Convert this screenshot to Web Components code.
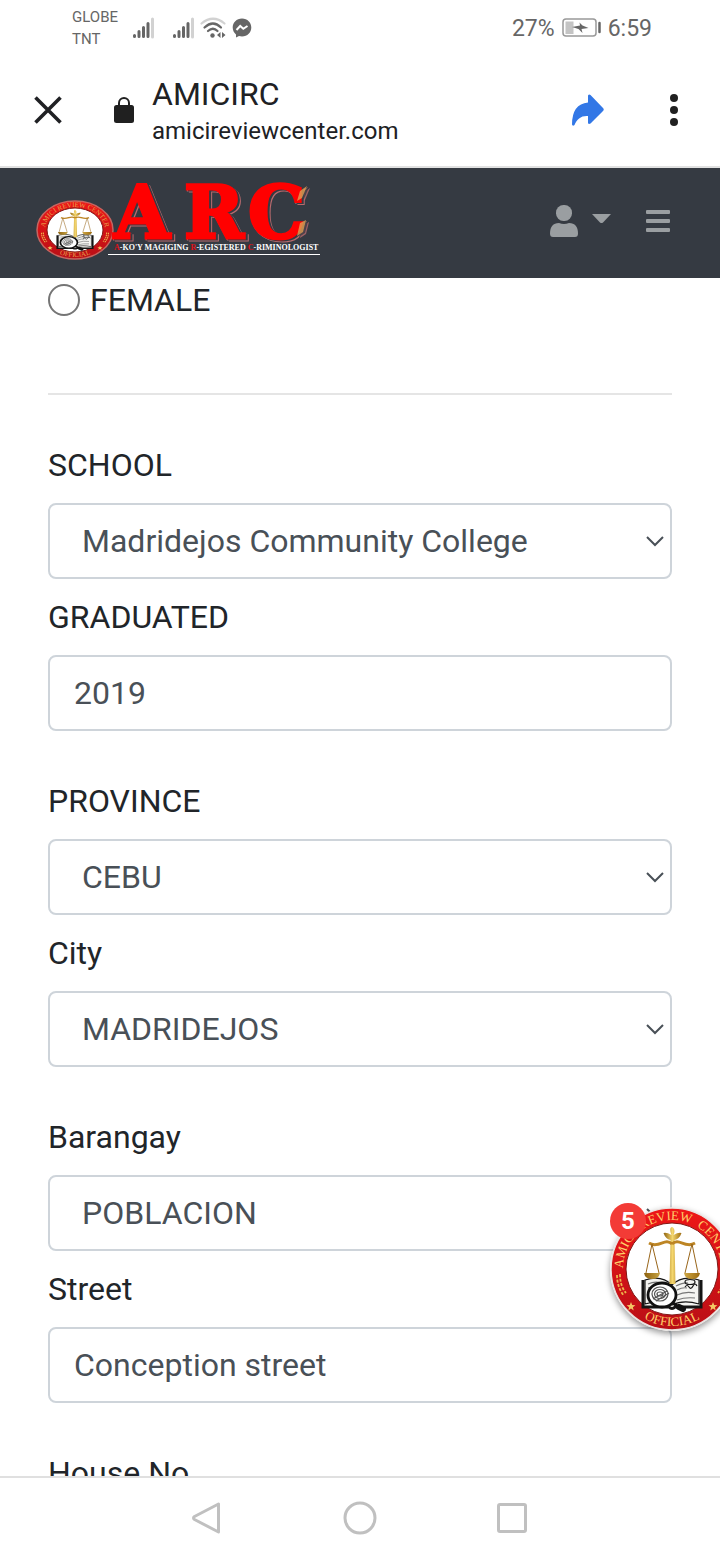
<!DOCTYPE html>
<html lang="en">
<head>
<meta charset="utf-8">
<meta name="viewport" content="width=device-width, initial-scale=1">
<title>AMICIRC</title>
<style>
html, body { margin: 0; height: 100%; }
body { font-family: Roboto, "Liberation Sans", sans-serif; color: #212529; background: #fff; }
</style>
</head>
<body>
<app-screen>
  <status-bar slot="top"></status-bar>
  <browser-bar slot="top" heading="AMICIRC" host-name="amicireviewcenter.com"></browser-bar>
  <site-header slot="top"></site-header>
  <radio-choice name="gender" label="FEMALE"></radio-choice>
  <section-rule></section-rule>
  <field-group>
    <form-field kind="select" name="school" label="SCHOOL" value="Madridejos Community College"></form-field>
    <form-field kind="text" name="graduated" label="GRADUATED" value="2019"></form-field>
  </field-group>
  <field-group>
    <form-field kind="select" name="province" label="PROVINCE" value="CEBU"></form-field>
    <form-field kind="select" name="city" label="City" value="MADRIDEJOS"></form-field>
  </field-group>
  <field-group>
    <form-field kind="select" name="barangay" label="Barangay" value="POBLACION"></form-field>
    <form-field kind="text" name="street" label="Street" value="Conception street"></form-field>
  </field-group>
  <field-group>
    <form-field kind="text" name="house" label="House No." value=""></form-field>
  </field-group>
  <chat-head slot="overlay" count="5"></chat-head>
  <system-nav slot="bottom"></system-nav>
</app-screen>
<script>
const define = (name, render) => customElements.define(name, class extends HTMLElement {
  connectedCallback() {
    if (this.shadowRoot) return;
    this.attachShadow({ mode: "open" }).innerHTML = render(this);
  }
});

const buttonReset = `button { appearance: none; border: 0; padding: 0; margin: 0; background: none; color: inherit; font: inherit; display: grid; place-items: center; cursor: pointer; } svg { display: block; }`;

define("app-screen", () => `
<style>
  :host { display: flex; flex-direction: column; height: 100vh; position: relative; overflow: hidden; }
  main { flex: 1; min-height: 0; overflow: hidden; padding: 0 48px; }
</style>
<slot name="top"></slot>
<main><slot></slot></main>
<slot name="bottom"></slot>
<slot name="overlay"></slot>`);

define("status-bar", () => `
<style>
  :host { display: flex; align-items: center; justify-content: space-between; height: 56px; flex: none; padding: 0 68px 0 72px; color: #666; }
  div { display: flex; align-items: center; }
  .carrier { font-size: 15px; line-height: 22px; width: 60px; }
  .right { font-size: 23px; gap: 7px; }
  svg { display: block; }
  .sig { margin-right: 18px; }
  .wifi { margin: 0 6px 0 -12px; }
</style>
<div>
  <div class="carrier"><span>GLOBE<br>TNT</span></div>
  <svg class="sig" width="22" height="22" viewBox="0 0 22 22" stroke-width="3" stroke-linecap="round" stroke="#666"><path d="M2.5 19.5v-1M7 19.5v-5M11.500 19.500v-9M16 19.500v-13"/><path d="M20.500 20V2" stroke="#d2d2d2"/></svg>
  <svg class="sig" width="22" height="22" viewBox="0 0 22 22" stroke-width="3" stroke-linecap="round" stroke="#666"><path d="M2.500 19.500v-1M7 19.500v-5M11.500 19.500v-9M16 19.500v-13"/><path d="M20.500 20V2" stroke="#d2d2d2"/></svg>
  <svg class="wifi" width="26" height="22" viewBox="0 0 26 22" fill="none" stroke="#666" stroke-width="2.200" stroke-linecap="round"><path d="M1.500 6.500Q13-3 24.500 6.500" stroke="#d2d2d2"/><path d="M4.500 10.500Q13 2.500 21 10.500M8 14Q13 9.500 17.500 14"/><circle cx="12.500" cy="18.500" r="2.200" fill="#666" stroke="none"/><path d="M20.500 15v6l-3.500-3zM22 15v6l3.500-3z" fill="#666" stroke="none"/></svg>
  <svg width="20" height="20" viewBox="0 0 20 20"><path d="M10 .5C4.500.5.7 4.500.7 9.500c0 3 1.300 5.300 3.300 7V19.500l3-1.500c1 .3 2 .4 3 .4 5.500 0 9.300-3.900 9.300-8.900S15.500.5 10 .5z" fill="#666"/><path d="M4.500 12l3.700-4 3.100 2.800L15.500 8" fill="none" stroke="#fff" stroke-width="2"/></svg>
</div>
<div class="right">
  <span>27%</span>
  <svg width="39" height="20" viewBox="0 0 39 20"><rect x="1" y="1" width="33" height="17" rx="3" fill="#fff" stroke="#999" stroke-width="1.500"/><rect x="3.500" y="3.500" width="8" height="12.500" fill="#c4c4c4"/><path d="M10 9l8-1.500-.5-3 3 3 6 2.500-7 1 1 4-4-4z" fill="#666"/><path d="M37.500 5v9" stroke="#666" stroke-width="2.500" stroke-linecap="round"/></svg>
  <span>6:59</span>
</div>`);

define("browser-bar", el => `
<style>
  :host { display: flex; align-items: center; box-sizing: border-box; height: 112px; flex: none; border-bottom: 2px solid #e1e1e1; padding: 0 22px 2px 24px; color: #202124; }
  ${buttonReset}
  button { width: 48px; height: 48px; }
  .lock { margin: 0 18px 0 42px; }
  .page { flex: 1; min-width: 0; padding-top: 4px; }
  .heading { font-size: 32px; line-height: 38px; }
  .host { font-size: 24px; line-height: 36px; }
  .more { margin-left: 38px; }
</style>
<button aria-label="Close"><svg width="28" height="28" viewBox="0 0 28 28"><path d="M1.500 1.500l25 25M26.500 1.500l-25 25" stroke="#202124" stroke-width="3.600"/></svg></button>
<svg class="lock" width="20" height="26" viewBox="0 0 20 26"><rect y="8" width="20" height="18" rx="2.500" fill="#202020"/><path d="M5 9V6a5 5 0 0 1 10 0v3" fill="none" stroke="#202020" stroke-width="2"/></svg>
<div class="page"><div class="heading">${el.getAttribute("heading")}</div><div class="host">${el.getAttribute("host-name")}</div></div>
<button aria-label="Share"><svg width="32" height="32" viewBox="0 0 32 32"><path d="M16 1.500q1-1.800 2.500-.5L31 14q1.500 1.500 0 3L18.500 29.500q-2 1-2.500-.5V22C9 21.500 5 25 2.500 31Q.500 32.500 0 30.500 0 10 16 8.500z" fill="#3277e6"/></svg></button>
<button class="more" aria-label="More options"><svg width="8" height="32" viewBox="0 0 8 32" fill="#202020"><circle cx="4" cy="4" r="4"/><circle cx="4" cy="16" r="4"/><circle cx="4" cy="28" r="4"/></svg></button>`);

/* Review centre seal; the ring and its lettering follow an ellipse of the given radii. */
define("center-seal", el => {
  const big = el.getAttribute("size") !== "small";
  const w = big ? 124 : 78, h = big ? 124 : 60, cx = w / 2, cy = h / 2;
  const rx = cx - 1, ry = cy - 1;
  const ix = big ? 46 : 28, iy = big ? 46 : 22;
  const tx = big ? 49 : 30, ty = big ? 49 : 23;
  const bx = big ? 57 : 35, by = big ? 57 : 27;
  const arcText = big ? "AMICI&nbsp; REVIEW&nbsp; CENTER" : "AMICI REVIEW CENTER";
  return `
<style>
  :host { display: block; }
  svg { display: block; overflow: visible; }
  text { font-family: "Liberation Serif", serif; font-size: ${big ? 13 : 7}px; fill: ${big ? "#ffce69" : "#e8a24c"}; }
</style>
<svg width="${w}" height="${h}" viewBox="0 0 ${w} ${h}">
  <defs>
    <path id="upper" d="M${cx - tx} ${cy}A${tx} ${ty} 0 0 1 ${cx + tx} ${cy}"/>
    <path id="lower" d="M${cx - bx} ${cy}A${bx} ${by} 0 0 0 ${cx + bx} ${cy}"/>
    <linearGradient id="gold"><stop stop-color="#8d610d"/><stop offset=".5" stop-color="#f4d66d"/><stop offset="1" stop-color="#9d6b10"/></linearGradient>
    <linearGradient id="red" x2="0" y2="1"><stop stop-color="#ee1717"/><stop offset="1" stop-color="#b90f16"/></linearGradient>
  </defs>
  <ellipse cx="${cx}" cy="${cy}" rx="${rx}" ry="${ry}" fill="url(#red)" stroke="${big ? "#e9e3e0" : "#c76560"}" stroke-width="1.500"/>
  <ellipse cx="${cx}" cy="${cy}" rx="${ix}" ry="${iy}" fill="#fff" stroke="#7f1714" stroke-width="1"/>
  <text><textPath href="#upper" startOffset="50%" text-anchor="middle">${arcText}</textPath></text>
  <text><textPath href="#lower" startOffset="50%" text-anchor="middle">OFFICIAL</textPath></text>
  <g transform="translate(${cx} ${cy}) scale(${ix / 46} ${iy / 46})">
    <g fill="none" stroke="#edb64b" stroke-width="1.800" stroke-dasharray="3 1.500"><path d="M-55 6q0 12 7 21M-52 5q0 12 6 19M55 6q0 12-7 21M52 5q0 12-6 19"/></g>
    <g fill="#f4c764"><path id="star" d="M-41 33l1.200 3 3.200.2-2.500 2 .8 3.200-2.700-1.800-2.700 1.800 .8-3.200-2.500-2 3.200-.2z"/><use href="#star" x="82"/></g>
    <g stroke="#151515" fill="#f4f4f1" stroke-width="1.200">
      <path d="M-29 11v27h26q3 3 6 0H29V11" stroke-width="3"/>
      <path d="M0 16C-8 8-18 8-27 11v24c10-3 19-3 27 1 8-4 17-4 27-1V11C18 8 8 8 0 16z"/>
      <path d="M0 16v20" stroke="#777"/>
      <path d="M-24 15q9-4 19 1M-24 19q9-3 19 1M4 17q8-4 12-3M5 21q6-3 10-2M5 26q8-4 18-2M5 31q8-3 18-2" stroke="#777" fill="none"/>
      <ellipse cx="18" cy="13" rx="5" ry="2.500" fill="none"/><path d="M13 18q2-3 4 0t4-1 4 0" fill="none"/>
    </g>
    <ellipse cx="-10" cy="26" rx="14" ry="12" fill="#fff" stroke="#111" stroke-width="2.800"/>
    <g fill="none" stroke="#555" stroke-width="1.200"><ellipse cx="-12" cy="25" rx="8" ry="7"/><ellipse cx="-12" cy="25" rx="5.500" ry="4.500"/><ellipse cx="-12" cy="25" rx="3" ry="2"/><path d="M-19 30l14-8M-16 32l13-8"/></g>
    <path d="M1 34l4 3" stroke="#111" stroke-width="3"/><path d="M7 38l4 2" stroke="#111" stroke-width="6" stroke-linecap="round"/>
    <path d="M-1.500-41q1.500-2 3 0 2 3 0 7 5-3 8-2-2 6-7 7l1 44h-6l1-44q-5-1-7-7 3-1 8 2-2-4-1-7z" fill="url(#gold)"/>
    <path d="M0-25c-7-7-13 5-23-1M0-25c7-7 13 5 23-1" stroke="#bd8524" stroke-width="2.800" fill="none"/>
    <path d="M-20-25L-26 4M-20-25L-13 4M20-25L13 4M20-25L26 4" stroke="#98651a" stroke-width="1" fill="none"/>
    <path d="M-28 4h16q-1 6-8 6t-8-6zM12 4h16q-1 6-8 6t-8-6z" fill="url(#gold)"/>
  </g>
</svg>`;
});

define("arc-wordmark", () => `
<style>
  :host { display: block; }
  svg { display: block; overflow: visible; }
  .big { font: bold 72px "DejaVu Serif", serif; filter: drop-shadow(2px 1px 0 #353a42) drop-shadow(1px 1px 0 #b96a6d); }
  .line { font: bold 8px "Liberation Serif", serif; fill: #fff; }
</style>
<svg width="216" height="76" viewBox="0 0 216 76">
  <g class="big">
    <text x="6 76 140" y="53" fill="#f00" stroke="#f00" stroke-width="3">ARC</text>
    <path d="M192 6l7-5-5 12-5 3zM192 38l6-3-3 12-6 4z" fill="#e3a052" opacity=".8"/>
  </g>
  <text class="line" x="6" y="65"><tspan fill="#e01018">A</tspan>-KO'Y MAGIGING <tspan fill="#e01018">R</tspan>-EGISTERED <tspan fill="#e01018">C</tspan>-RIMINOLOGIST</text>
  <path d="M0 69.500h212" stroke="#fff"/>
</svg>`);

define("site-header", () => `
<style>
  :host { display: flex; align-items: center; box-sizing: border-box; height: 110px; flex: none; background: #353a42; color: #9a9ea1; padding: 0 38px 4px 36px; }
  ${buttonReset}
  a { display: flex; align-items: center; margin-right: auto; padding-top: 4px; }
  center-seal { margin: 14px -6px 0 0; }
  .user { display: flex; gap: 14px; align-items: center; height: 48px; }
  .user svg + svg { margin-bottom: 4px; }
  .menu { width: 48px; height: 48px; margin-left: 23px; }
</style>
<a href="#" aria-label="ARC home"><center-seal size="small"></center-seal><arc-wordmark></arc-wordmark></a>
<button class="user" aria-label="Account">
  <svg width="28" height="32" viewBox="0 0 28 32" fill="currentColor"><rect x="6" width="16" height="16" rx="7.500"/><path d="M0 28.500C0 22 3 18 9 18q5 2 10 0c6 0 9 4 9 10.500q0 3.500-3 3.500H3q-3 0-3-3.500z"/></svg>
  <svg width="19" height="10" viewBox="0 0 19 10" fill="currentColor"><path d="M0 0h19l-8 8.500q-1.500 1-3 0z"/></svg>
</button>
<button class="menu" aria-label="Menu"><svg width="24" height="22" viewBox="0 0 24 22" fill="currentColor"><rect width="24" height="4" rx="1"/><rect y="9" width="24" height="4" rx="1"/><rect y="18" width="24" height="4" rx="1"/></svg></button>`);

define("radio-choice", el => `
<style>
  :host { display: block; }
  label { display: flex; align-items: center; gap: 10px; height: 44px; font-size: 32px; }
  input { appearance: none; box-sizing: border-box; width: 32px; height: 32px; margin: 0; border: 2px solid #757575; border-radius: 50%; background: #fff; }
  input:checked { background: #0075ff content-box; padding: 4px; }
</style>
<label><input type="radio" name="${el.getAttribute("name")}">${el.getAttribute("label")}</label>`);

define("section-rule", () => `
<style>:host { display: block; } hr { margin: 71px 0 44px; border: 0; border-top: 2px solid #e5e5e5; }</style><hr>`);

define("field-group", () => `
<style>:host { display: grid; gap: 12px; margin-bottom: 44px; }</style><slot></slot>`);

define("form-field", el => {
  const name = el.getAttribute("name"), value = el.getAttribute("value");
  const control = el.getAttribute("kind") === "select"
    ? `<select id="${name}" name="${name}"><option>${value}</option></select>
       <svg width="18" height="12" viewBox="0 0 18 12" fill="none" stroke="#495057" stroke-width="2"><path d="M1 2l8 8 8-8"/></svg>`
    : `<input id="${name}" name="${name}" type="text" value="${value}">`;
  return `
<style>
  :host { display: block; }
  label { display: block; font-size: 32px; line-height: 48px; padding-top: 2px; margin-bottom: 14px; }
  .box { display: grid; align-items: center; }
  .box > * { grid-area: 1 / 1; }
  input, select { appearance: none; box-sizing: border-box; width: 100%; height: 76px; margin: 0; border: 2px solid #ced4da; border-radius: 8px; background: #fff; color: #495057; font: inherit; font-size: 32px; padding: 0 24px; }
  select { padding: 0 56px 0 32px; }
  svg { justify-self: end; margin-right: 8px; pointer-events: none; }
</style>
<label for="${name}">${el.getAttribute("label")}</label>
<div class="box">${control}</div>`;
});

define("chat-head", el => `
<style>
  :host { display: block; position: absolute; right: -14px; bottom: 229px; border-radius: 50%; box-shadow: 0 3px 6px rgba(0,0,0,.4); }
  span { position: absolute; left: 0; top: -4px; width: 36px; height: 36px; border-radius: 50%; background: #f33b36; color: #fff; font-size: 24px; font-weight: bold; line-height: 36px; text-align: center; }
</style>
<center-seal size="large"></center-seal><span>${el.getAttribute("count")}</span>`);

define("system-nav", () => `
<style>
  :host { display: block; flex: none; border-top: 2px solid #e0e0e0; background: #fff; }
  nav { display: grid; grid-template-columns: repeat(3, 152px); justify-content: center; height: 80px; padding-bottom: 2px; }
  ${buttonReset}
</style>
<nav aria-label="System">
  <button aria-label="Back"><svg width="32" height="34" viewBox="0 0 32 34" fill="none" stroke="#c0c0c0" stroke-width="3" stroke-linejoin="round"><path d="M26.500 3v28L2.500 18.500q-2-1.500 0-3z"/></svg></button>
  <button aria-label="Home"><svg width="34" height="34" viewBox="0 0 34 34" fill="none" stroke="#c0c0c0" stroke-width="3"><circle cx="17" cy="17" r="15"/></svg></button>
  <button aria-label="Recents"><svg width="30" height="30" viewBox="0 0 30 30" fill="none" stroke="#c0c0c0" stroke-width="3"><rect x="1.500" y="1.500" width="27" height="27" rx="1.500"/></svg></button>
</nav>`);
</script>
</body>
</html>
